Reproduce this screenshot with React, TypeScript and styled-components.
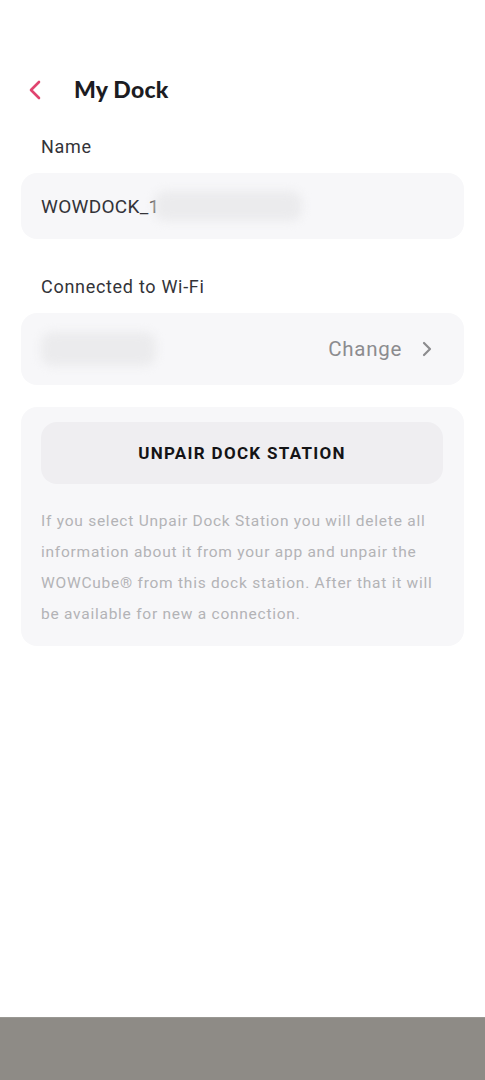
import React from "react";
import styled, { createGlobalStyle } from "styled-components";

const Global = createGlobalStyle`
  html, body { margin: 0; padding: 0; background: #ffffff; }
  body { font-family: Roboto, "Liberation Sans", sans-serif; -webkit-font-smoothing: antialiased; }
  #root { min-height: 100vh; }
`;

const Screen = styled.div`
  min-height: 100vh;
  display: flex;
  flex-direction: column;
  background: #ffffff;
`;

const Content = styled.main`
  flex: 1;
  padding: 62px 21px 0 21px;
  display: flex;
  flex-direction: column;
`;

const Header = styled.header`
  height: 56px;
  display: flex;
  align-items: center;
  gap: 30px;
  padding-left: 5px;
`;

const BackButton = styled.button`
  width: 18px;
  height: 24px;
  padding: 0;
  border: 0;
  background: transparent;
  display: flex;
  align-items: center;
  justify-content: center;
  cursor: pointer;
`;

const Title = styled.h1`
  margin: 0;
  margin-top: -2px;
  font-family: Lato, "Noto Sans", sans-serif;
  font-weight: 900;
  font-size: 23px;
  color: #1c1c22;
  letter-spacing: 0.2px;
`;

const FieldLabel = styled.div<{ $top: number }>`
  margin-top: ${(p) => p.$top}px;
  padding-left: 20px;
  height: 24px;
  line-height: 24px;
  font-size: 18px;
  color: #333338;
  letter-spacing: 0.7px;
`;

const Card = styled.section<{ $height?: number; $top: number }>`
  margin-top: ${(p) => p.$top}px;
  background: #f7f7f9;
  border-radius: 16px;
  ${(p) => (p.$height ? `height: ${p.$height}px;` : "")}
  box-sizing: border-box;
`;

const Row = styled.div`
  height: 100%;
  display: flex;
  align-items: center;
  padding: 0 31px 0 20px;
`;

const Value = styled.span`
  font-size: 19px;
  color: #333338;
  letter-spacing: 0.3px;
`;

const Redacted = styled.span<{ $w: number; $h: number }>`
  display: inline-block;
  width: ${(p) => p.$w}px;
  height: ${(p) => p.$h}px;
  background: #ebebed;
  border-radius: 12px;
  filter: blur(5px);
`;

const Spacer = styled.div`
  flex: 1;
`;

const ChangeText = styled.span`
  font-size: 20.5px;
  color: #8c8c8f;
  letter-spacing: 0.7px;
  margin-right: 19px;
`;

const ActionCard = styled(Card)`
  padding: 15px 21px 16px 20px;
`;

const UnpairButton = styled.button`
  width: 100%;
  height: 62px;
  border: 0;
  border-radius: 16px;
  background: #efeef1;
  font-family: Roboto, "Liberation Sans", sans-serif;
  font-weight: 700;
  font-size: 17px;
  letter-spacing: 1.3px;
  color: #141416;
  cursor: pointer;
`;

const Note = styled.p`
  margin: 22px 0 0 0;
  font-size: 15.5px;
  line-height: 31px;
  letter-spacing: 0.75px;
  color: #b3b3b6;
`;

const NavBar = styled.div`
  height: 63px;
  background: #8e8b86;
  border-top: 1px solid #9a9893;
  box-sizing: border-box;
`;

export default function App() {
  return (
    <>
      <Global />
      <Screen>
        <Content>
          <Header>
            <BackButton aria-label="Back">
              <svg width="14" height="20" viewBox="0 0 14 20">
                <path d="M11 2 L3 10 L11 18" fill="none" stroke="#e0446f" strokeWidth="2.6" strokeLinecap="round" strokeLinejoin="round" />
              </svg>
            </BackButton>
            <Title>My Dock</Title>
          </Header>

          <FieldLabel $top={17}>Name</FieldLabel>
          <Card $top={14} $height={66}>
            <Row>
              <Value>WOWDOCK_1</Value>
              <Redacted $w={148} $h={30} style={{ marginLeft: -6 }} />
            </Row>
          </Card>

          <FieldLabel $top={36}>Connected to Wi-Fi</FieldLabel>
          <Card $top={14} $height={72}>
            <Row>
              <Redacted $w={115} $h={34} />
              <Spacer />
              <ChangeText>Change</ChangeText>
              <svg width="12" height="18" viewBox="0 0 12 18">
                <path d="M3 3 L9 9 L3 15" fill="none" stroke="#8c8c8f" strokeWidth="2.2" strokeLinecap="round" strokeLinejoin="round" />
              </svg>
            </Row>
          </Card>

          <ActionCard $top={22}>
            <UnpairButton>UNPAIR DOCK STATION</UnpairButton>
            <Note>
              If you select Unpair Dock Station you will delete all information about it from your app and unpair the WOWCube® from this dock station. After that it will be available for new a connection.
            </Note>
          </ActionCard>
        </Content>
        <NavBar />
      </Screen>
    </>
  );
}
